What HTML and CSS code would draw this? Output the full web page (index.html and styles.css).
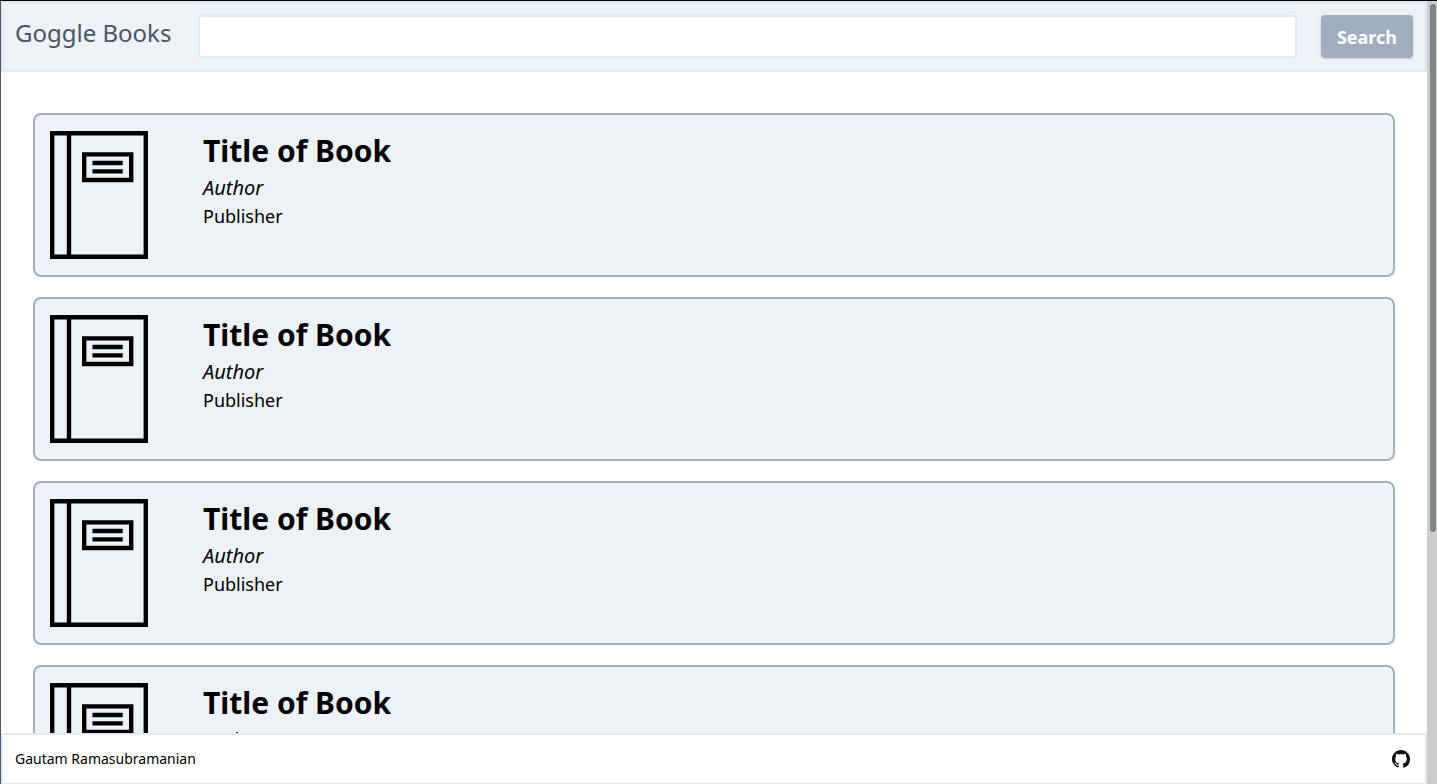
FILE: index.html
```html
<!DOCTYPE html>
<html lang="en">
<head>
<meta charset="utf-8">
<title>Goggle Books</title>
<link rel="stylesheet" href="styles.css">
</head>
<body>
<svg class="sprite" aria-hidden="true">
  <symbol id="book" viewBox="0 0 128 128">
    <g fill="none" stroke="#000" stroke-width="4.4">
      <path d="M17.2 2.2H110.8V125.8H17.2Z"/>
      <path d="M34 0V128"/>
      <path d="M49.2 23.4H96.2V49H49.2Z"/>
      <path d="M57.5 32H87.7M57.5 40.4H87.7"/>
    </g>
  </symbol>
</svg>
<div class="page">
  <header class="header">
    <h1 class="brand">Goggle Books</h1>
    <form class="search">
      <input class="search-input" type="text" aria-label="Search books">
      <button class="search-button" type="button">Search</button>
    </form>
  </header>
  <main class="books">
    <article class="card">
      <svg class="cover" aria-hidden="true"><use href="#book"/></svg>
      <div class="details"><h2 class="title">Title of Book</h2><p class="author">Author</p><p class="publisher">Publisher</p></div>
    </article>
    <article class="card">
      <svg class="cover" aria-hidden="true"><use href="#book"/></svg>
      <div class="details"><h2 class="title">Title of Book</h2><p class="author">Author</p><p class="publisher">Publisher</p></div>
    </article>
    <article class="card">
      <svg class="cover" aria-hidden="true"><use href="#book"/></svg>
      <div class="details"><h2 class="title">Title of Book</h2><p class="author">Author</p><p class="publisher">Publisher</p></div>
    </article>
    <article class="card">
      <svg class="cover" aria-hidden="true"><use href="#book"/></svg>
      <div class="details"><h2 class="title">Title of Book</h2><p class="author">Author</p><p class="publisher">Publisher</p></div>
    </article>
  </main>
  <footer class="footer">
    <span>Gautam Ramasubramanian</span>
    <a class="github" href="#" aria-label="GitHub">
      <svg class="github-icon" viewBox="0 0 16 16" aria-hidden="true"><path fill="#111" d="M8 0C3.58 0 0 3.58 0 8c0 3.54 2.29 6.53 5.47 7.59.4.07.55-.17.55-.38 0-.19-.01-.82-.01-1.49-.5.1-1.1.1-1.6-.05-.5-.2-.8-.6-1.09-.99-.23-.38-.48-.74-.82-.93-.28-.15-.68-.52-.01-.53.63-.01 1.08.58 1.23.82.72 1.21 1.87.87 2.33.66.02-.3.1-.6.25-.85-1.9-.3-3.38-1.2-3.38-4.17 0-.87.31-1.59.82-2.15-.08-.2-.36-1.3.08-2.3 0 0 .8-.1 2.2.85.64-.18 1.32-.22 2-.22s1.36.04 2 .22c1.4-.95 2.2-.85 2.2-.85.44 1 .16 2.1.08 2.3.51.56.82 1.27.82 2.15 0 2.97-1.6 3.9-3.4 4.17.2.35.29.8.29 1.26 0 1.07-.01 1.93-.01 2.2 0 .21.15.46.55.38A8.01 8.01 0 0 0 16 8c0-4.42-3.58-8-8-8z"/></svg>
    </a>
  </footer>
</div>
<div class="scrollbar" aria-hidden="true"><div class="thumb"></div></div>
</body>
</html>
```
FILE: styles.css
```css
* {
  box-sizing: border-box;
  margin: 0;
}

body {
  display: flex;
  height: 100vh;
  overflow: hidden;
  border-top: 1px solid #000;
  border-left: 1px solid #4a5568;
  background: #fff;
  color: #000;
  font-family: "Noto Sans", sans-serif;
}

.sprite {
  display: none;
}

.page {
  display: flex;
  flex: 1;
  flex-direction: column;
  min-width: 0;
}

.header {
  display: flex;
  flex: none;
  gap: 27px;
  padding: 12px;
  border: 2px solid #e2e8f0;
  background: #edf2f7;
}

.brand {
  color: #4a5568;
  font-size: 24px;
  font-weight: 400;
  line-height: 36px;
}

.search {
  display: flex;
  flex: 1;
  gap: 24px;
}

.search-input {
  flex: 1;
  min-width: 0;
  padding: 8px 16px;
  border: 2px solid #e2e8f0;
  border-radius: 4px;
  background: #fff;
  font: inherit;
}

.search-button {
  padding: 9px 16px 7px;
  border: 0;
  border-radius: 4px;
  background: #a0aec0;
  box-shadow: 0 1px 3px rgba(0, 0, 0, 0.1), 0 1px 2px rgba(0, 0, 0, 0.06);
  color: #fff;
  font-family: inherit;
  font-size: 18px;
  font-weight: 700;
  line-height: 27px;
}

.books {
  display: flex;
  flex: 1;
  flex-direction: column;
  gap: 20px;
  min-height: 0;
  padding: 41px 32px 0;
  overflow: hidden;
}

.card {
  display: flex;
  flex: none;
  gap: 40px;
  padding: 16px 0;
  border: 2px solid #a0aec0;
  border-radius: 8px;
  background: #edf2f7;
}

.cover {
  flex: none;
  width: 128px;
  height: 128px;
}

.title {
  font-size: 30px;
  font-weight: 700;
  line-height: 40px;
}

.author {
  font-size: 20px;
  font-style: italic;
  line-height: 34px;
}

.publisher {
  font-size: 18px;
  line-height: 22px;
}

.footer {
  display: flex;
  flex: none;
  align-items: center;
  justify-content: space-between;
  padding: 12px 15px 12px 12px;
  border: 2px solid #e2e8f0;
  border-bottom-width: 1px;
  font-size: 14px;
  line-height: 24px;
}

.github,
.github-icon {
  display: block;
  width: 18px;
  height: 18px;
}

.scrollbar {
  flex: none;
  width: 10px;
  padding: 3px 1px 3px 3px;
  background: #cdcdcd;
}

.thumb {
  height: 68%;
  border-radius: 3px;
  background: #7f8584;
}
```
